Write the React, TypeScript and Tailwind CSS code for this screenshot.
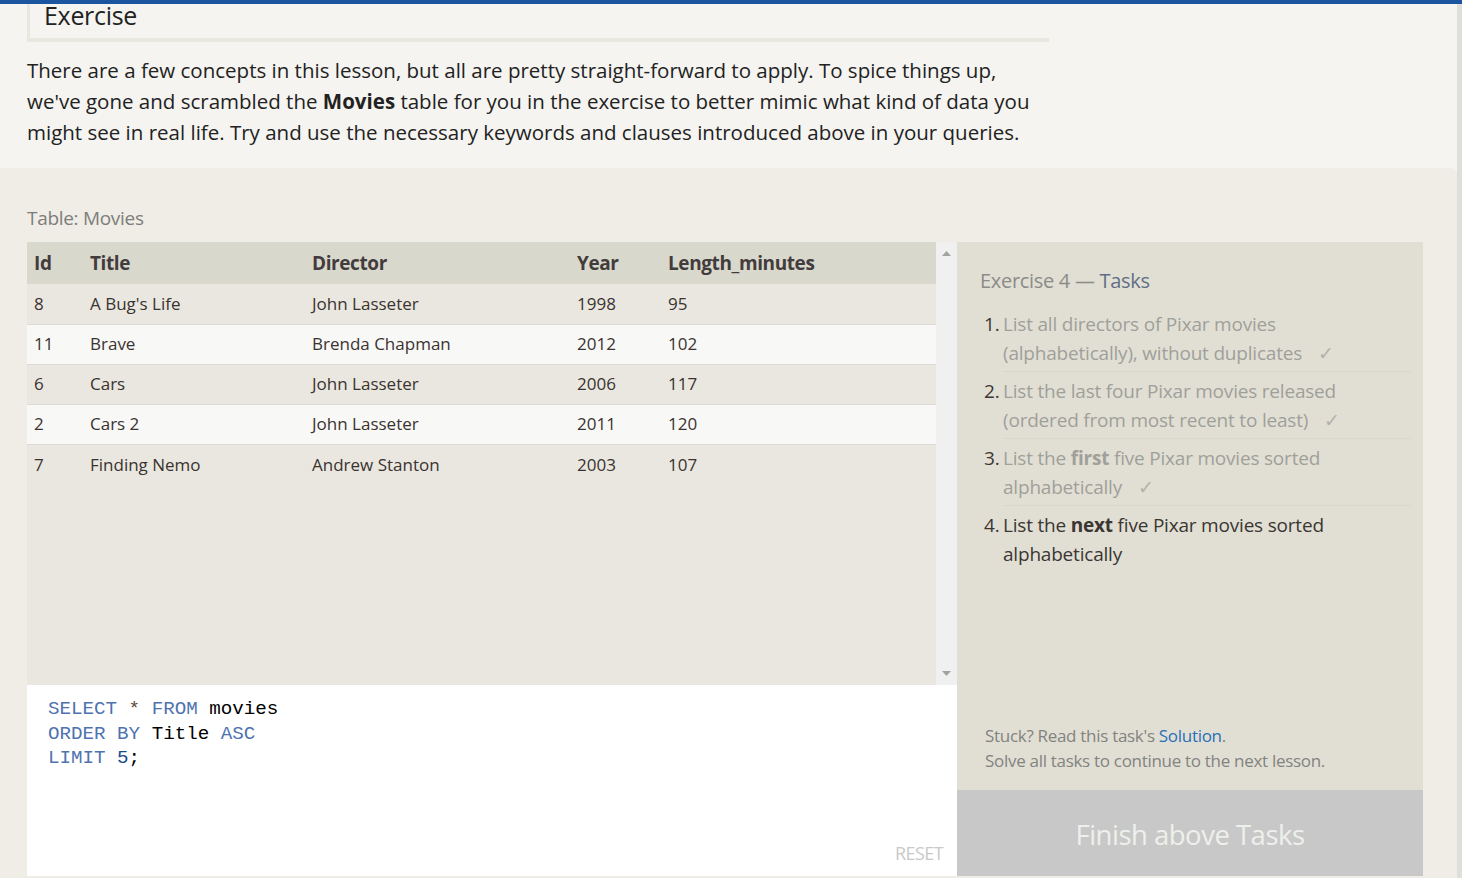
import { useState } from "react";

type Movie = { id: number; title: string; director: string; year: number; length: number };

const movies: Movie[] = [
  { id: 8, title: "A Bug's Life", director: "John Lasseter", year: 1998, length: 95 },
  { id: 11, title: "Brave", director: "Brenda Chapman", year: 2012, length: 102 },
  { id: 6, title: "Cars", director: "John Lasseter", year: 2006, length: 117 },
  { id: 2, title: "Cars 2", director: "John Lasseter", year: 2011, length: 120 },
  { id: 7, title: "Finding Nemo", director: "Andrew Stanton", year: 2003, length: 107 },
];

const font = "font-['Open_Sans','Noto_Sans',sans-serif]";

function Check() {
  return <span className="ml-4 text-[#b3b2aa]">✓</span>;
}

export default function App() {
  const [query] = useState("SELECT * FROM movies\nORDER BY Title ASC\nLIMIT 5;");

  const tasks = [
    { n: 1, done: true, body: <>List all directors of Pixar movies (alphabetically), without duplicates</> },
    { n: 2, done: true, body: <>List the last four Pixar movies released (ordered from most recent to least)</> },
    { n: 3, done: true, body: <>List the <b className="font-bold">first</b> five Pixar movies sorted alphabetically</> },
    { n: 4, done: false, body: <>List the <b className="font-bold">next</b> five Pixar movies sorted alphabetically</> },
  ];

  return (
    <div className={`h-[878px] w-[1462px] overflow-hidden bg-[#f5f4f0] ${font} flex flex-col`}>
      {/* top bar */}
      <div className="h-[4px] bg-[#1c559f] shrink-0" />

      <div className="flex flex-1 min-h-0">
        <div className="flex-1 flex flex-col min-w-0">
          {/* LESSON TEXT */}
          <div className="pl-[27px] h-[164px] shrink-0">
            <div className="w-[1022px] h-[38px] border-l-[3px] border-b-[4px] border-[#e7e6df] flex items-end pl-[14px] pb-[10px]">
              <h2 className="text-[25px] leading-none text-[#222] tracking-[-0.3px]">Exercise</h2>
            </div>
            <p className="mt-[13px] w-[1080px] text-[20.5px] leading-[31px] text-[#222] tracking-[0px]">
              There are a few concepts in this lesson, but all are pretty straight-forward to apply. To spice things up,
              <br />
              we've gone and scrambled the <b className="font-bold">Movies</b> table for you in the exercise to better mimic what kind of data you
              <br />
              might see in real life. Try and use the necessary keywords and clauses introduced above in your queries.
            </p>
          </div>

          {/* EXERCISE AREA */}
          <div className="flex-1 bg-[#efede6] rounded-tr-[6px] pl-[27px] pt-[37px]">
            <div className="text-[19px] leading-[26px] text-[#7d7d7b] tracking-[-0.3px] h-[37px]">Table: Movies</div>

            <div className="flex">
              {/* left: table + editor */}
              <div className="w-[930px] flex flex-col">
                <div className="h-[443px] flex bg-[#e9e7df]">
                  <div className="flex-1">
                    <table className="w-full border-collapse text-left">
                      <thead>
                        <tr className="h-[42px] bg-[#d9d8cc] text-[19px] font-bold text-[#433c3c] tracking-[-0.4px]">
                          <th className="pl-[7px] w-[63px] font-bold">Id</th>
                          <th className="w-[222px] font-bold">Title</th>
                          <th className="w-[265px] font-bold">Director</th>
                          <th className="w-[91px] font-bold">Year</th>
                          <th className="font-bold">Length_minutes</th>
                        </tr>
                      </thead>
                      <tbody className="text-[17px] text-[#3a3330]">
                        {movies.map((m, i) => (
                          <tr
                            key={m.id}
                            className={`h-[40px] ${i < movies.length - 1 ? "border-b border-[#dcdbd4]" : ""} ${
                              i % 2 === 0 ? "bg-[#e9e7df]" : "bg-[#f8f8f7]"
                            }`}
                          >
                            <td className="pl-[7px]">{m.id}</td>
                            <td>{m.title}</td>
                            <td>{m.director}</td>
                            <td>{m.year}</td>
                            <td>{m.length}</td>
                          </tr>
                        ))}
                      </tbody>
                    </table>
                  </div>
                  {/* scrollbar */}
                  <div className="w-[21px] bg-[#f0f0f0] flex flex-col items-center justify-between py-[9px]">
                    <svg width="9" height="5" viewBox="0 0 9 5"><path d="M4.5 0 L9 5 L0 5 Z" fill="#a3a39e" /></svg>
                    <svg width="9" height="5" viewBox="0 0 9 5"><path d="M0 0 L9 0 L4.5 5 Z" fill="#a3a39e" /></svg>
                  </div>
                </div>

                {/* editor */}
                <div className="h-[191px] bg-white relative">
                  <pre className="pl-[21px] pt-[12px] font-['Liberation_Mono','DejaVu_Sans_Mono',monospace] text-[19.2px] leading-[24.5px] text-black">
                    {query && (
                      <>
                        <span className="text-[#4e73b0]">SELECT</span> <span className="text-[#5a4a3a]">*</span>{" "}
                        <span className="text-[#4e73b0]">FROM</span> movies{"\n"}
                        <span className="text-[#4e73b0]">ORDER BY</span> Title <span className="text-[#4e73b0]">ASC</span>
                        {"\n"}
                        <span className="text-[#4e73b0]">LIMIT</span> <span className="text-[#164a8a]">5</span>;
                      </>
                    )}
                  </pre>
                  <span className="absolute right-[14px] bottom-[14px] text-[18px] leading-none text-[#c9c9c6] tracking-[-0.6px]">RESET</span>
                </div>
              </div>

              {/* right: tasks */}
              <div className="w-[466px] flex flex-col">
                <div className="h-[548px] bg-[#e1dfd4] flex flex-col justify-between pl-[23px] pr-[11px] pt-[25px] pb-[17px]">
                  <div>
                    <h3 className="text-[20px] leading-[28px] text-[#8b8b88] tracking-[-0.3px]">
                      Exercise 4 — <span className="text-[#5f6f86]">Tasks</span>
                    </h3>
                    <ol className="mt-[15px] pl-[4px] text-[19px] leading-[29px] tracking-[-0.2px]">
                      {tasks.map((t, i) => (
                        <li key={t.n} className={`flex ${i === 0 ? "" : "pt-[5px]"}`}>
                          <span className="w-[19px] shrink-0 text-[#3b3633]">{t.n}.</span>
                          <div
                            className={`flex-1 pr-[70px] pb-[3px] ${
                              i < tasks.length - 1 ? "border-b border-dotted border-[#d3d1c5]" : ""
                            } ${t.done ? "text-[#a09f9a]" : "text-[#3b3633]"}`}
                          >
                            {t.body}
                            {t.done && <Check />}
                          </div>
                        </li>
                      ))}
                    </ol>
                  </div>
                  <div className="pl-[5px] text-[17px] leading-[25px] text-[#838380] tracking-[-0.3px]">
                    <p>
                      Stuck? Read this task's <span className="text-[#2a6fb8]">Solution</span>.
                    </p>
                    <p>Solve all tasks to continue to the next lesson.</p>
                  </div>
                </div>
                <button className="h-[86px] pt-[3px] bg-[#c8c8c8] text-[27.5px] text-[#eef0ec] tracking-[-0.5px]">
                  Finish above Tasks
                </button>
              </div>
            </div>
          </div>
        </div>
        {/* page edge */}
        <div className="w-[5px] bg-[#dfded9] shrink-0" />
      </div>
    </div>
  );
}
